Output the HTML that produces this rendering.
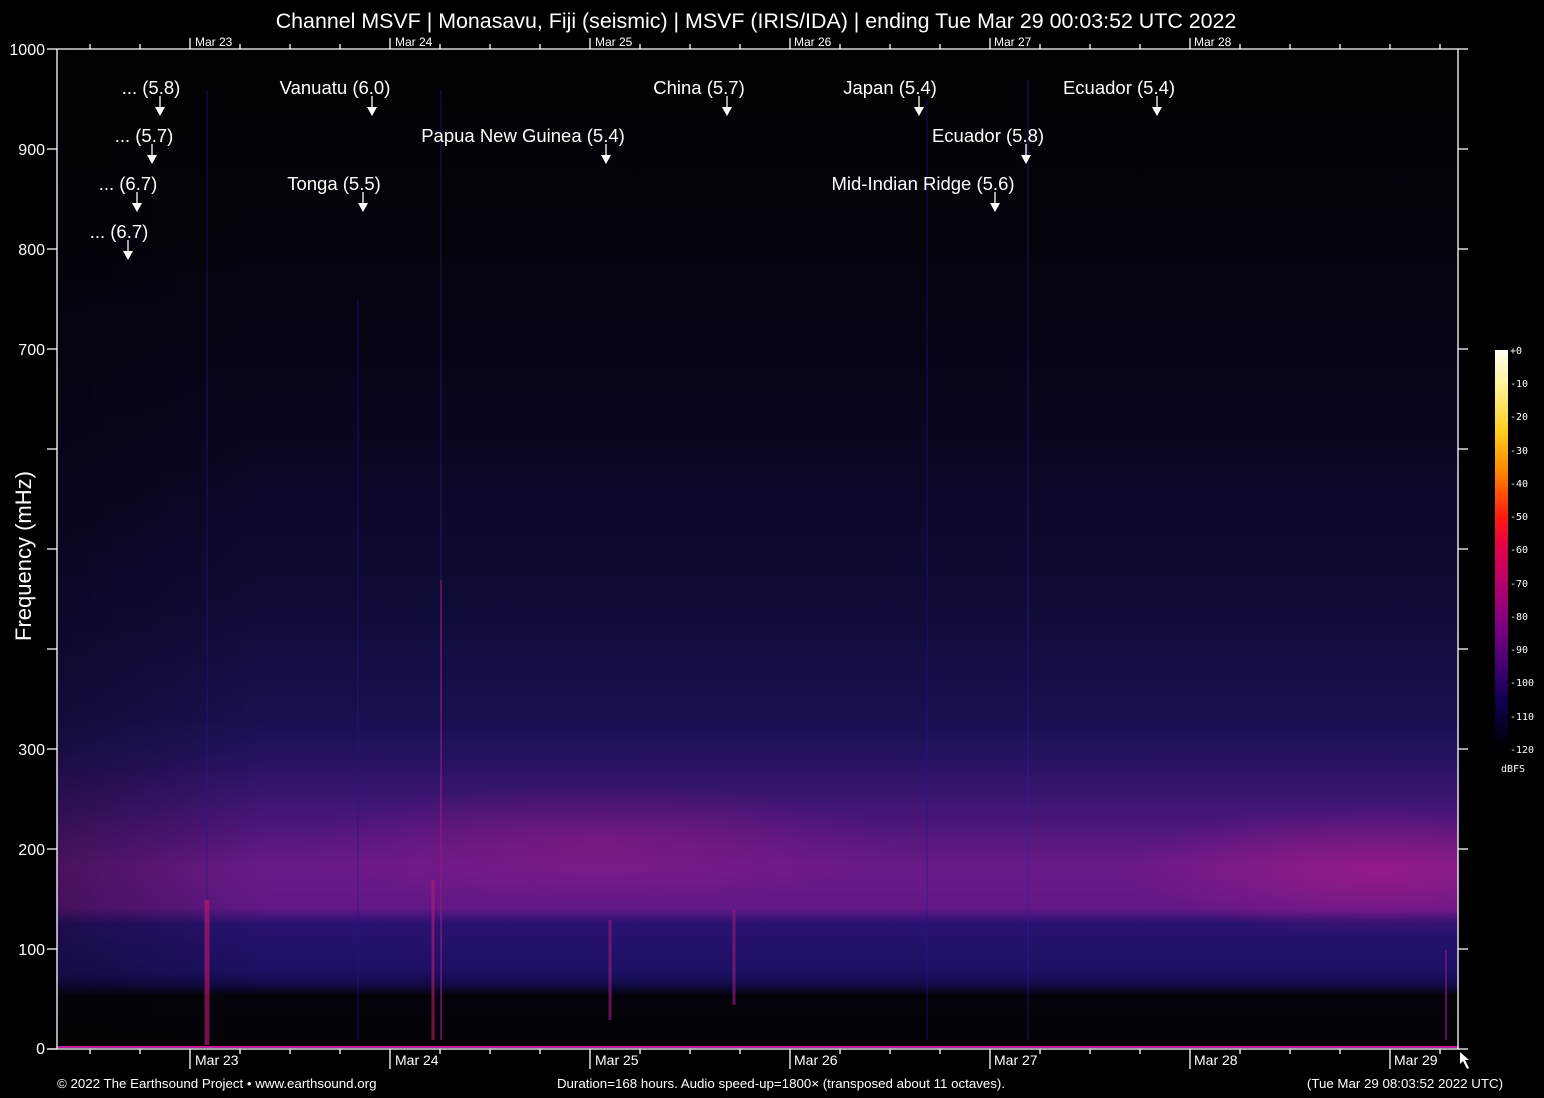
<!DOCTYPE html>
<html><head><meta charset="utf-8"><style>
html,body{margin:0;padding:0;background:#000;}
body{width:1544px;height:1098px;overflow:hidden;position:relative;font-family:"Liberation Sans",sans-serif;color:#fff;}
svg{position:absolute;left:0;top:0;}
</style></head><body>
<svg width="1544" height="1098" viewBox="0 0 1544 1098" xmlns="http://www.w3.org/2000/svg" font-family="Liberation Sans, sans-serif">
<defs>
<linearGradient id="v" x1="0" y1="49" x2="0" y2="1048" gradientUnits="userSpaceOnUse">
<stop offset="0" stop-color="#020205"/>
<stop offset="0.2" stop-color="#03030c"/>
<stop offset="0.35" stop-color="#07061c"/>
<stop offset="0.55" stop-color="#0e0b36"/>
<stop offset="0.67" stop-color="#181050"/>
<stop offset="0.72" stop-color="#2a1366"/>
<stop offset="0.77" stop-color="#481678"/>
<stop offset="0.82" stop-color="#6a1a88"/>
<stop offset="0.86" stop-color="#621886"/>
<stop offset="0.875" stop-color="#2a1270"/>
<stop offset="0.925" stop-color="#1c1062"/>
<stop offset="0.937" stop-color="#120a44"/>
<stop offset="0.947" stop-color="#04030c"/>
<stop offset="1" stop-color="#020206"/>
</linearGradient>
<radialGradient id="r1" cx="1380" cy="870" r="260" gradientUnits="userSpaceOnUse" gradientTransform="translate(0 870) scale(1 0.25) translate(0 -870)">
<stop offset="0" stop-color="#b01a8a" stop-opacity="0.6"/>
<stop offset="1" stop-color="#b01a8a" stop-opacity="0"/>
</radialGradient>
<radialGradient id="r2" cx="600" cy="845" r="300" gradientUnits="userSpaceOnUse" gradientTransform="translate(0 845) scale(1 0.2) translate(0 -845)">
<stop offset="0" stop-color="#a01a88" stop-opacity="0.45"/>
<stop offset="1" stop-color="#a01a88" stop-opacity="0"/>
</radialGradient>
<linearGradient id="h" x1="57" y1="0" x2="1458" y2="0" gradientUnits="userSpaceOnUse">
<stop offset="0" stop-color="#000" stop-opacity="0.3"/>
<stop offset="0.15" stop-color="#000" stop-opacity="0"/>
<stop offset="1" stop-color="#000" stop-opacity="0"/>
</linearGradient>
</defs>
<rect x="57" y="49" width="1401" height="999" fill="url(#v)"/>
<rect x="57" y="49" width="1401" height="999" fill="url(#r1)"/>
<rect x="57" y="49" width="1401" height="999" fill="url(#r2)"/>
<rect x="57" y="49" width="1401" height="999" fill="url(#h)"/>
<!-- event streaks -->
<g stroke-width="1" opacity="0.6">
<line x1="207" y1="90" x2="207" y2="1045" stroke="#2a1a80"/>
<line x1="207" y1="900" x2="207" y2="1045" stroke="#c01a70" stroke-width="5"/>
<line x1="441" y1="90" x2="441" y2="1040" stroke="#3a1a90"/>
<line x1="433" y1="880" x2="433" y2="1040" stroke="#c01a70" stroke-width="3"/>
<line x1="441" y1="580" x2="441" y2="1040" stroke="#901a80" stroke-width="2"/>
<line x1="1028" y1="80" x2="1028" y2="1040" stroke="#3020a0"/>
<line x1="927" y1="100" x2="927" y2="1040" stroke="#22168a"/>
<line x1="358" y1="300" x2="358" y2="1040" stroke="#22168a"/>
<line x1="610" y1="920" x2="610" y2="1020" stroke="#a01a80" stroke-width="3"/>
<line x1="734" y1="910" x2="734" y2="1005" stroke="#a01a80" stroke-width="3"/>
<line x1="1446" y1="950" x2="1446" y2="1040" stroke="#901a80" stroke-width="2"/>
</g>
<line x1="57" y1="1047" x2="1458" y2="1047" stroke="#c020a0" stroke-width="2"/>
<!-- axes -->
<g stroke="#fff" stroke-width="1.3" fill="none">
<line x1="57" y1="49" x2="1468" y2="49"/>
<line x1="57" y1="49" x2="57" y2="1049"/>
<line x1="1458" y1="49" x2="1458" y2="1049"/>
<line x1="47" y1="1049" x2="1468" y2="1049"/>
<path d="M47 49H57M47 149H57M47 249H57M47 349H57M47 449H57M47 549H57M47 649H57M47 749H57M47 849H57M47 949H57M47 1049H57"/>
<path d="M1458 149H1468M1458 249H1468M1458 349H1468M1458 449H1468M1458 549H1468M1458 649H1468M1458 749H1468M1458 849H1468M1458 949H1468"/>
<path d="M90 49V44M140 49V44M190 49V38M240 49V44M290 49V44M340 49V44M390 49V38M440 49V44M490 49V44M540 49V44M590 49V38M640 49V44M690 49V44M740 49V44M790 49V38M840 49V44M890 49V44M940 49V44M990 49V38M1040 49V44M1090 49V44M1140 49V44M1190 49V38M1240 49V44M1290 49V44M1340 49V44M1390 49V44M1440 49V44"/>
<path d="M90 1049V1054M140 1049V1054M190 1049V1069M240 1049V1054M290 1049V1054M340 1049V1054M390 1049V1069M440 1049V1054M490 1049V1054M540 1049V1054M590 1049V1069M640 1049V1054M690 1049V1054M740 1049V1054M790 1049V1069M840 1049V1054M890 1049V1054M940 1049V1054M990 1049V1069M1040 1049V1054M1090 1049V1054M1140 1049V1054M1190 1049V1069M1240 1049V1054M1290 1049V1054M1340 1049V1054M1390 1049V1069M1440 1049V1054"/>
</g>
<path d="M1460 1052 L1460 1064 L1463 1061 L1467 1069 L1469 1068 L1465 1060 L1469 1060 Z" fill="#fff"/>
<g fill="#fff" font-size="16" text-anchor="end">
<text x="45" y="55">1000</text><text x="45" y="155">900</text><text x="45" y="255">800</text><text x="45" y="355">700</text>
<text x="45" y="755">300</text><text x="45" y="855">200</text><text x="45" y="955">100</text><text x="45" y="1054">0</text>
</g>
<text transform="translate(31 556) rotate(-90)" text-anchor="middle" fill="#fff" font-size="22">Frequency (mHz)</text>
<text x="756" y="28" text-anchor="middle" fill="#fff" font-size="21.4">Channel MSVF | Monasavu, Fiji (seismic) | MSVF (IRIS/IDA) | ending Tue Mar 29 00:03:52 UTC 2022</text>
<g fill="#fff" font-size="12">
<text x="195" y="46">Mar 23</text><text x="395" y="46">Mar 24</text><text x="595" y="46">Mar 25</text><text x="794" y="46">Mar 26</text><text x="994" y="46">Mar 27</text><text x="1194" y="46">Mar 28</text>
</g>
<g fill="#fff" font-size="14">
<text x="195" y="1065">Mar 23</text><text x="395" y="1065">Mar 24</text><text x="595" y="1065">Mar 25</text><text x="794" y="1065">Mar 26</text><text x="994" y="1065">Mar 27</text><text x="1194" y="1065">Mar 28</text><text x="1394" y="1065">Mar 29</text>
</g>
<g fill="#fff" font-size="13.3">
<text x="57" y="1088">© 2022 The Earthsound Project • www.earthsound.org</text>
<text x="781" y="1088" text-anchor="middle">Duration=168 hours. Audio speed-up=1800× (transposed about 11 octaves).</text>
<text x="1503" y="1088" text-anchor="end">(Tue Mar 29 08:03:52 2022 UTC)</text>
</g>
<!-- annotations -->
<g fill="#fff" font-size="18.5" text-anchor="middle">
<text x="151" y="94">... (5.8)</text>
<text x="144" y="142">... (5.7)</text>
<text x="128" y="190">... (6.7)</text>
<text x="119" y="238">... (6.7)</text>
<text x="335" y="94">Vanuatu (6.0)</text>
<text x="334" y="190">Tonga (5.5)</text>
<text x="523" y="142">Papua New Guinea (5.4)</text>
<text x="699" y="94">China (5.7)</text>
<text x="890" y="94">Japan (5.4)</text>
<text x="988" y="142">Ecuador (5.8)</text>
<text x="923" y="190">Mid-Indian Ridge (5.6)</text>
<text x="1119" y="94">Ecuador (5.4)</text>
</g>
<g stroke="#fff" stroke-width="1.3">
<line x1="160" y1="96" x2="160" y2="108"/><line x1="152" y1="144" x2="152" y2="156"/><line x1="137" y1="192" x2="137" y2="204"/><line x1="128" y1="240" x2="128" y2="252"/>
<line x1="372" y1="96" x2="372" y2="108"/><line x1="363" y1="192" x2="363" y2="204"/><line x1="606" y1="144" x2="606" y2="156"/><line x1="727" y1="96" x2="727" y2="108"/>
<line x1="919" y1="96" x2="919" y2="108"/><line x1="1026" y1="144" x2="1026" y2="156"/><line x1="995" y1="192" x2="995" y2="204"/><line x1="1157" y1="96" x2="1157" y2="108"/>
</g>
<g fill="#fff">
<path d="M155 107h10l-5 9z"/><path d="M147 155h10l-5 9z"/><path d="M132 203h10l-5 9z"/><path d="M123 251h10l-5 9z"/>
<path d="M367 107h10l-5 9z"/><path d="M358 203h10l-5 9z"/><path d="M601 155h10l-5 9z"/><path d="M722 107h10l-5 9z"/>
<path d="M914 107h10l-5 9z"/><path d="M1021 155h10l-5 9z"/><path d="M990 203h10l-5 9z"/><path d="M1152 107h10l-5 9z"/>
</g>
<!-- colorbar -->
<defs><linearGradient id="cb" x1="0" y1="350" x2="0" y2="748" gradientUnits="userSpaceOnUse">
<stop offset="0" stop-color="#fffff5"/><stop offset="0.1" stop-color="#fff08a"/><stop offset="0.2" stop-color="#ffd020"/>
<stop offset="0.3" stop-color="#ff8a00"/><stop offset="0.42" stop-color="#ff1a10"/><stop offset="0.5" stop-color="#e0004a"/>
<stop offset="0.6" stop-color="#b00070"/><stop offset="0.7" stop-color="#7a0080"/><stop offset="0.8" stop-color="#400070"/>
<stop offset="0.88" stop-color="#100050"/><stop offset="1" stop-color="#000005"/></linearGradient></defs>
<rect x="1495" y="350" width="13" height="399" fill="url(#cb)"/>
<g fill="#fff" font-size="10" font-family="DejaVu Sans Mono, monospace">
<text x="1510" y="354">+0</text><text x="1510" y="387">-10</text><text x="1510" y="420">-20</text><text x="1510" y="454">-30</text>
<text x="1510" y="487">-40</text><text x="1510" y="520">-50</text><text x="1510" y="553">-60</text><text x="1510" y="587">-70</text>
<text x="1510" y="620">-80</text><text x="1510" y="653">-90</text><text x="1510" y="686">-100</text><text x="1510" y="720">-110</text>
<text x="1510" y="753">-120</text><text x="1501" y="772">dBFS</text>
</g>
</svg>
</body></html>
